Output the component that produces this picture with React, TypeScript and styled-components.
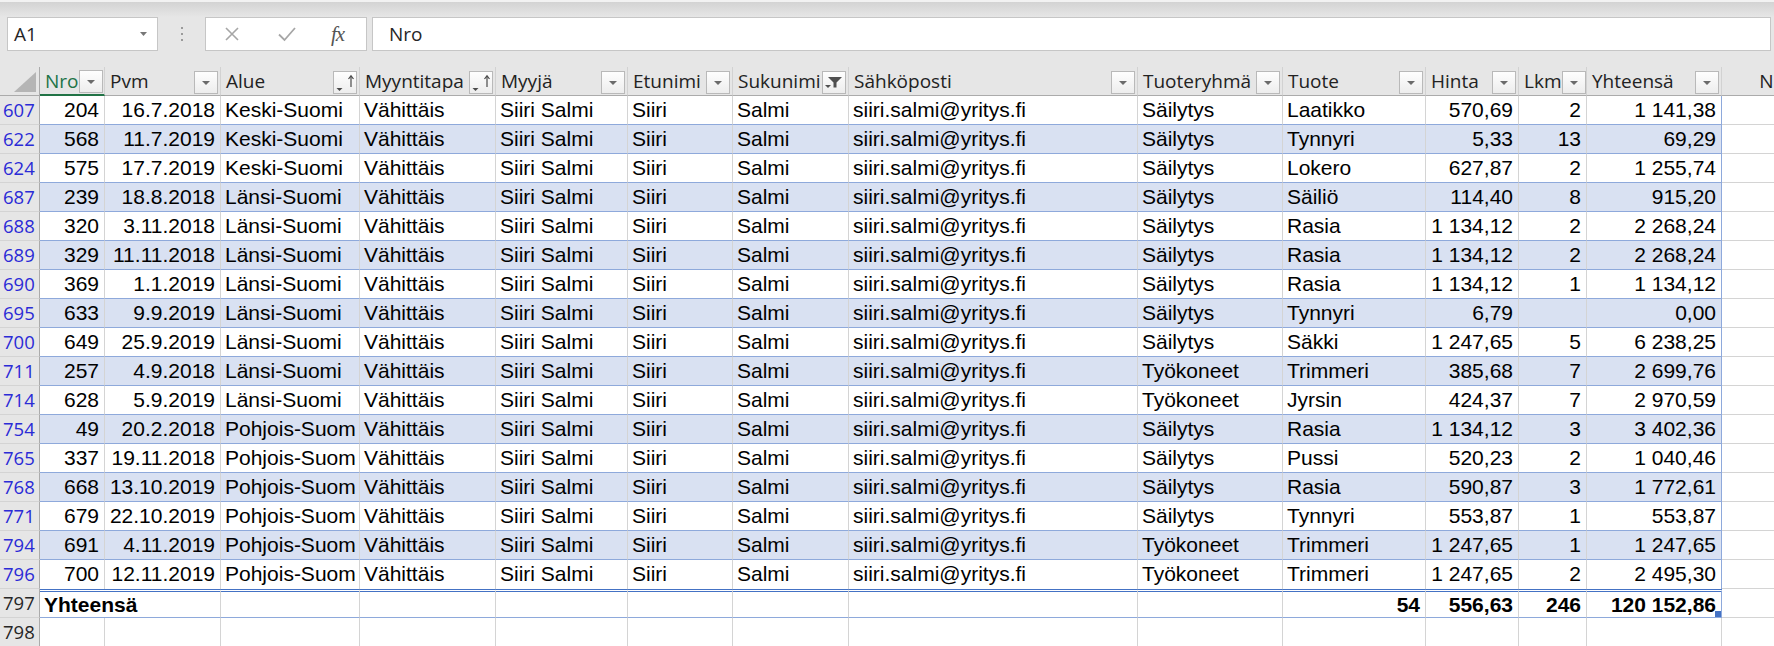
import React from "react";
import styled, { createGlobalStyle, css } from "styled-components";

const GlobalStyle = createGlobalStyle`
  html, body { margin: 0; padding: 0; background: #fff; }
  body { width: 1774px; height: 646px; overflow: hidden; }
  #root { width: 1774px; height: 646px; overflow: hidden; }
`;

const UI_FONT = `"Open Sans", "Noto Sans", sans-serif`;
const CELL_FONT = `"Liberation Sans", Arial, sans-serif`;

const WIDTHS = [40, 65, 116, 139, 136, 132, 105, 116, 289, 145, 143, 93, 68, 135, 90];
const COLS = WIDTHS.map((w) => `${w}px`).join(" ");

type Align = "left" | "right";
type IconKind = "plain" | "sort" | "filter";

interface Column {
  label: string;
  align: Align;
  icon: IconKind;
}

const columns: Column[] = [
  { label: "Nro", align: "right", icon: "plain" },
  { label: "Pvm", align: "right", icon: "plain" },
  { label: "Alue", align: "left", icon: "sort" },
  { label: "Myyntitapa", align: "left", icon: "sort" },
  { label: "Myyjä", align: "left", icon: "plain" },
  { label: "Etunimi", align: "left", icon: "plain" },
  { label: "Sukunimi", align: "left", icon: "filter" },
  { label: "Sähköposti", align: "left", icon: "plain" },
  { label: "Tuoteryhmä", align: "left", icon: "plain" },
  { label: "Tuote", align: "left", icon: "plain" },
  { label: "Hinta", align: "right", icon: "plain" },
  { label: "Lkm", align: "right", icon: "plain" },
  { label: "Yhteensä", align: "right", icon: "plain" },
];

type RowData = string[];

const P = ["Vähittäis", "Siiri Salmi", "Siiri", "Salmi", "siiri.salmi@yritys.fi"];
/* the region name is cut off by the next cell, as in the sheet */
const POHJOIS = "Pohjois-Suom";

const rows: RowData[] = [
  ["607", "204", "16.7.2018", "Keski-Suomi", ...P, "Säilytys", "Laatikko", "570,69", "2", "1 141,38"],
  ["622", "568", "11.7.2019", "Keski-Suomi", ...P, "Säilytys", "Tynnyri", "5,33", "13", "69,29"],
  ["624", "575", "17.7.2019", "Keski-Suomi", ...P, "Säilytys", "Lokero", "627,87", "2", "1 255,74"],
  ["687", "239", "18.8.2018", "Länsi-Suomi", ...P, "Säilytys", "Säiliö", "114,40", "8", "915,20"],
  ["688", "320", "3.11.2018", "Länsi-Suomi", ...P, "Säilytys", "Rasia", "1 134,12", "2", "2 268,24"],
  ["689", "329", "11.11.2018", "Länsi-Suomi", ...P, "Säilytys", "Rasia", "1 134,12", "2", "2 268,24"],
  ["690", "369", "1.1.2019", "Länsi-Suomi", ...P, "Säilytys", "Rasia", "1 134,12", "1", "1 134,12"],
  ["695", "633", "9.9.2019", "Länsi-Suomi", ...P, "Säilytys", "Tynnyri", "6,79", "", "0,00"],
  ["700", "649", "25.9.2019", "Länsi-Suomi", ...P, "Säilytys", "Säkki", "1 247,65", "5", "6 238,25"],
  ["711", "257", "4.9.2018", "Länsi-Suomi", ...P, "Työkoneet", "Trimmeri", "385,68", "7", "2 699,76"],
  ["714", "628", "5.9.2019", "Länsi-Suomi", ...P, "Työkoneet", "Jyrsin", "424,37", "7", "2 970,59"],
  ["754", "49", "20.2.2018", POHJOIS, ...P, "Säilytys", "Rasia", "1 134,12", "3", "3 402,36"],
  ["765", "337", "19.11.2018", POHJOIS, ...P, "Säilytys", "Pussi", "520,23", "2", "1 040,46"],
  ["768", "668", "13.10.2019", POHJOIS, ...P, "Säilytys", "Rasia", "590,87", "3", "1 772,61"],
  ["771", "679", "22.10.2019", POHJOIS, ...P, "Säilytys", "Tynnyri", "553,87", "1", "553,87"],
  ["794", "691", "4.11.2019", POHJOIS, ...P, "Työkoneet", "Trimmeri", "1 247,65", "1", "1 247,65"],
  ["796", "700", "12.11.2019", POHJOIS, ...P, "Työkoneet", "Trimmeri", "1 247,65", "2", "2 495,30"],
];

/* ---------- formula bar ---------- */

const Page = styled.div`
  width: 1774px;
  height: 646px;
  overflow: hidden;
  background: #fff;
  display: flex;
  flex-direction: column;
`;

const FormulaBar = styled.div`
  flex: none;
  height: 67px;
  box-sizing: border-box;
  display: flex;
  align-items: flex-start;
  padding: 17px 3px 0 7px;
  background: linear-gradient(
    to bottom,
    #f2f2f2 0,
    #f2f2f2 2px,
    #d3d3d3 2px,
    #e6e6e6 17px,
    #e6e6e6 100%
  );
`;

const InputBox = styled.div`
  height: 34px;
  box-sizing: border-box;
  border: 1px solid #c6c6c6;
  background: #fff;
  display: flex;
  align-items: center;
  font-family: ${UI_FONT};
  font-size: 19px;
  color: #262626;
`;

const NameBox = styled(InputBox)`
  width: 151px;
  flex: none;
  justify-content: space-between;
  padding: 0 10px 0 6px;
`;

const Grip = styled.div`
  width: 47px;
  height: 34px;
  flex: none;
  display: flex;
  flex-direction: column;
  align-items: center;
  justify-content: center;
  gap: 4px;
  & > span {
    width: 2px;
    height: 2px;
    background: #9a9a9a;
  }
`;

const FxBox = styled(InputBox)`
  width: 162px;
  flex: none;
  padding-left: 18px;
`;

const ToolIcon = styled.span<{ $ml: number }>`
  display: flex;
  margin-left: ${(p) => p.$ml}px;
  svg {
    display: block;
  }
`;

const FxLabel = styled.span<{ $ml: number }>`
  margin-left: ${(p) => p.$ml}px;
  font-family: "Liberation Serif", "DejaVu Serif", serif;
  font-style: italic;
  font-size: 21px;
  color: #555;
  letter-spacing: -1px;
`;

const FormulaInput = styled(InputBox)`
  flex: 1;
  margin-left: 5px;
  padding-left: 16px;
`;

/* ---------- sheet ---------- */

const GridRow = styled.div`
  display: grid;
  grid-template-columns: ${COLS};
  height: 29px;
  flex: none;
`;

const HeaderRow = styled(GridRow)`
  background: #e6e6e6;
`;

const Corner = styled.div`
  box-sizing: border-box;
  height: 29px;
  border-right: 1px solid #ababab;
  border-bottom: 1px solid #ababab;
  display: flex;
  justify-content: flex-end;
  align-items: flex-end;
  padding: 0 3px 3px 0;
`;

const CornerTriangle = styled.span`
  width: 0;
  height: 0;
  border-left: 22px solid transparent;
  border-bottom: 20px solid #b5b5b5;
`;

const ColumnHeader = styled.div<{ $active?: boolean; $center?: boolean }>`
  box-sizing: border-box;
  height: 29px;
  min-width: 0;
  display: flex;
  align-items: center;
  justify-content: ${(p) => (p.$center ? "center" : "flex-start")};
  padding-left: ${(p) => (p.$center ? "0" : "5px")};
  border-right: 1px solid #d2d2d2;
  border-bottom: ${(p) => (p.$active ? "2px solid #217346" : "1px solid #ababab")};
  color: ${(p) => (p.$active ? "#217346" : "#222")};
  font-family: ${UI_FONT};
  font-size: 19px;
  line-height: 28px;
  white-space: nowrap;
  overflow: hidden;
`;

const FilterButton = styled.span`
  flex: none;
  margin-left: auto;
  margin-right: 2px;
  margin-bottom: 1px;
  align-self: flex-end;
  width: 24px;
  height: 23px;
  box-sizing: border-box;
  border: 1px solid #b9b9b9;
  background: linear-gradient(to bottom, #fefefe, #ededed);
  display: flex;
  svg {
    display: block;
  }
`;

const cellBase = css`
  box-sizing: border-box;
  height: 29px;
  min-width: 0;
  padding: 0 5px 0 4px;
  font-family: ${CELL_FONT};
  font-size: 21px;
  line-height: 28px;
  color: #000;
  white-space: nowrap;
  overflow: hidden;
`;

const RowHeader = styled.div<{ $filtered?: boolean }>`
  box-sizing: border-box;
  height: 29px;
  padding-left: 3px;
  background: #e6e6e6;
  border-right: 1px solid #ababab;
  border-bottom: 1px solid #d4d4d4;
  font-family: ${UI_FONT};
  font-size: 18.5px;
  line-height: 28px;
  color: ${(p) => (p.$filtered ? "#2b2bd6" : "#262626")};
  white-space: nowrap;
  overflow: hidden;
`;

const DataCell = styled.div<{ $align: Align; $band: boolean; $edge: boolean; $lastRow: boolean }>`
  ${cellBase};
  text-align: ${(p) => p.$align};
  background: ${(p) => (p.$band ? "#d9e1f2" : "#fff")};
  border-right: 1px solid ${(p) => (p.$edge ? "#8ea9db" : "#d4d4d4")};
  border-bottom: ${(p) => (p.$lastRow ? "none" : "1px solid #8ea9db")};
`;

const TotalCell = styled.div<{ $align: Align; $edge?: boolean; $span?: number; $handle?: boolean }>`
  ${cellBase};
  position: relative;
  font-weight: bold;
  text-align: ${(p) => p.$align};
  grid-column: span ${(p) => p.$span ?? 1};
  background: #fff;
  border-top: 3px double #4472c4;
  border-right: 1px solid ${(p) => (p.$edge ? "#8ea9db" : "#d4d4d4")};
  border-bottom: 1px solid #8ea9db;
  line-height: 25px;
  ${(p) =>
    p.$handle &&
    css`
      &::after {
        content: "";
        position: absolute;
        right: 0;
        bottom: 0;
        width: 6px;
        height: 6px;
        background: #4472c4;
      }
    `}
`;

const SheetCell = styled.div`
  ${cellBase};
  background: #fff;
  border-right: 1px solid #d4d4d4;
  border-bottom: 1px solid #d4d4d4;
`;

/* ---------- icons ---------- */

const FilterIcon: React.FC<{ kind: IconKind }> = ({ kind }) => {
  if (kind === "sort") {
    return (
      <svg width="22" height="21" viewBox="0 0 22 21">
        <polygon points="2.5,16 8.5,16 5.5,19" fill="#4a4a4a" />
        <line x1="17" y1="4" x2="17" y2="15" stroke="#4a4a4a" strokeWidth="1.2" />
        <polyline points="14.5,7 17,3.8 19.5,7" fill="none" stroke="#4a4a4a" strokeWidth="1.2" />
      </svg>
    );
  }
  if (kind === "filter") {
    return (
      <svg width="22" height="21" viewBox="0 0 22 21">
        <polygon points="5,5 19,5 13.5,10.5 13.5,15.5 10.5,15.5 10.5,10.5" fill="#505050" />
        <polygon points="2,13 8,13 5,16" fill="#505050" />
      </svg>
    );
  }
  return (
    <svg width="22" height="21" viewBox="0 0 22 21">
      <polygon points="7,9 15,9 11,13" fill="#6b6b6b" />
    </svg>
  );
};

/* ---------- app ---------- */

const RIGHT_TABLE_COL = columns.length - 1;

export default function App() {
  return (
    <>
      <GlobalStyle />
      <Page>
        <FormulaBar>
          <NameBox>
            <span>A1</span>
            <svg width="7" height="4" viewBox="0 0 7 4">
              <polygon points="0,0 7,0 3.5,4" fill="#777" />
            </svg>
          </NameBox>
          <Grip>
            <span />
            <span />
            <span />
          </Grip>
          <FxBox>
            <ToolIcon $ml={0}>
              <svg width="16" height="16" viewBox="0 0 16 16">
                <path d="M2 2 L14 14 M14 2 L2 14" stroke="#a6a6a6" strokeWidth="1.6" fill="none" />
              </svg>
            </ToolIcon>
            <ToolIcon $ml={37}>
              <svg width="20" height="16" viewBox="0 0 20 16">
                <path d="M2 8.5 L7.5 14 L18 2" stroke="#a6a6a6" strokeWidth="1.8" fill="none" />
              </svg>
            </ToolIcon>
            <FxLabel $ml={34}>fx</FxLabel>
          </FxBox>
          <FormulaInput>Nro</FormulaInput>
        </FormulaBar>

        <HeaderRow>
          <Corner>
            <CornerTriangle />
          </Corner>
          {columns.map((c, i) => (
            <ColumnHeader key={c.label} $active={i === 0}>
              <span>{c.label}</span>
              <FilterButton>
                <FilterIcon kind={c.icon} />
              </FilterButton>
            </ColumnHeader>
          ))}
          <ColumnHeader $center>N</ColumnHeader>
        </HeaderRow>

        {rows.map((r, ri) => (
          <GridRow key={r[0]}>
            <RowHeader $filtered>{r[0]}</RowHeader>
            {columns.map((c, ci) => (
              <DataCell
                key={c.label}
                $align={c.align}
                $band={ri % 2 === 1}
                $edge={ci === RIGHT_TABLE_COL}
                $lastRow={ri === rows.length - 1}
              >
                {r[ci + 1]}
              </DataCell>
            ))}
            <SheetCell />
          </GridRow>
        ))}

        <GridRow>
          <RowHeader>797</RowHeader>
          <TotalCell $align="left" $span={2}>
            Yhteensä
          </TotalCell>
          <TotalCell $align="left" />
          <TotalCell $align="left" />
          <TotalCell $align="left" />
          <TotalCell $align="left" />
          <TotalCell $align="left" />
          <TotalCell $align="left" />
          <TotalCell $align="left" />
          <TotalCell $align="right">54</TotalCell>
          <TotalCell $align="right">556,63</TotalCell>
          <TotalCell $align="right">246</TotalCell>
          <TotalCell $align="right" $edge $handle>
            120 152,86
          </TotalCell>
          <SheetCell />
        </GridRow>

        <GridRow>
          <RowHeader>798</RowHeader>
          {WIDTHS.slice(1).map((w, i) => (
            <SheetCell key={i} />
          ))}
        </GridRow>
      </Page>
    </>
  );
}
